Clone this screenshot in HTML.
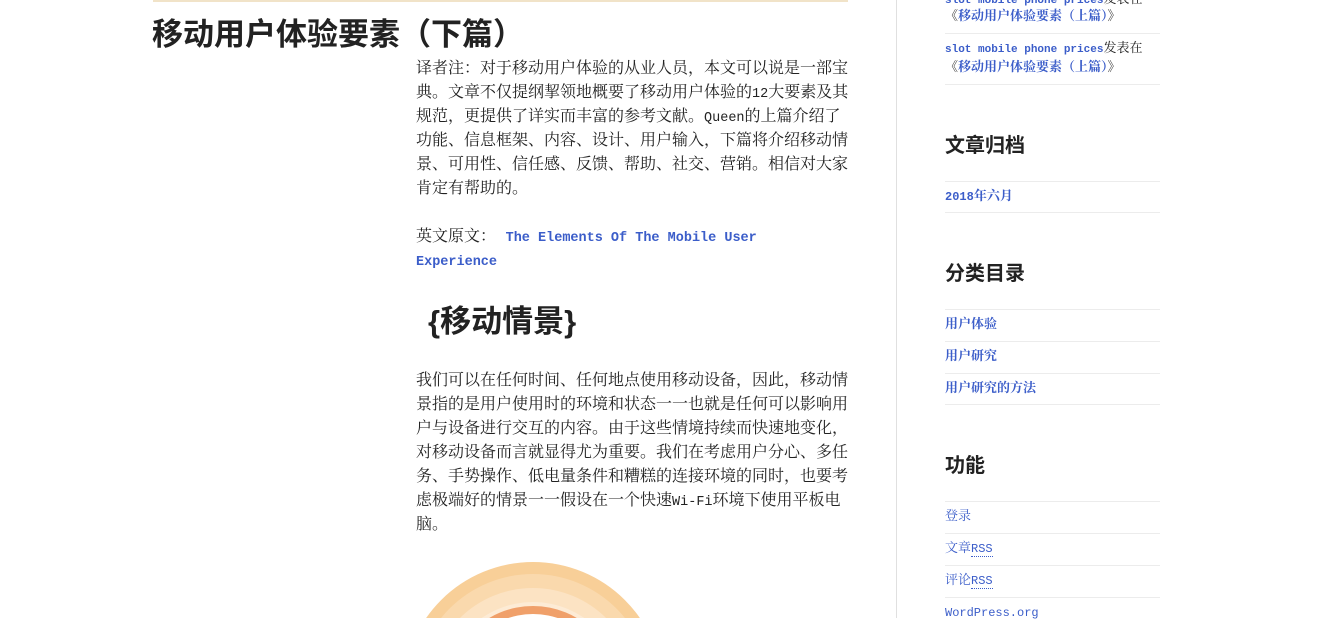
<!DOCTYPE html>
<html><head><meta charset="utf-8"><style>
body{margin:0;width:1319px;height:618px;overflow:hidden;background:#fff;position:relative;font-family:"Liberation Mono","Noto Serif CJK SC",monospace;color:#222}
.a{position:absolute;white-space:nowrap}
.t{font-family:"Liberation Sans","Noto Sans CJK SC",sans-serif;font-weight:bold;color:#222}
.p{left:416px;font-size:16px;line-height:24px}
.p div{height:24px;line-height:24px}
.m{font-size:13.5px;line-height:1}
.s{left:945px;font-size:13px;line-height:16px;color:#3b5dc9;font-weight:bold}
.e{font-size:11px;line-height:1}
.l{position:absolute;left:945px;width:215px;height:1px;background:#ececec}
a{color:#3b5dc9;text-decoration:none}
</style></head><body>
<div class="a" style="left:153px;top:0;width:695px;height:2px;background:#f1e3c8"></div>
<div class="a" style="left:896px;top:0;width:1px;height:618px;background:#e0e0e0"></div>
<div class="a t" style="left:152px;top:14px;font-size:31px;line-height:42px">移动用户体验要素（下篇）</div>
<div class="a p" style="top:57px"><div>译者注：对于移动用户体验的从业人员，本文可以说是一部宝</div><div>典。文章不仅提纲挈领地概要了移动用户体验的<span class="m">12</span>大要素及其</div><div>规范，更提供了详实而丰富的参考文献。<span class="m">Queen</span>的上篇介绍了</div><div>功能、信息框架、内容、设计、用户输入，下篇将介绍移动情</div><div>景、可用性、信任感、反馈、帮助、社交、营销。相信对大家</div><div>肯定有帮助的。</div></div>
<div class="a p" style="top:225px"><div>英文原文： <a class="m" style="font-weight:bold">The Elements Of The Mobile User</a></div><div><a class="m" style="font-weight:bold">Experience</a></div></div>
<div class="a t" style="left:428px;top:300px;font-size:31px;line-height:44px">{移动情景}</div>
<div class="a p" style="top:369px"><div>我们可以在任何时间、任何地点使用移动设备，因此，移动情</div><div>景指的是用户使用时的环境和状态一一也就是任何可以影响用</div><div>户与设备进行交互的内容。由于这些情境持续而快速地变化，</div><div>对移动设备而言就显得尤为重要。我们在考虑用户分心、多任</div><div>务、手势操作、低电量条件和糟糕的连接环境的同时，也要考</div><div>虑极端好的情景一一假设在一个快速<span class="m">Wi-Fi</span>环境下使用平板电</div><div>脑。</div></div>
<svg class="a" style="left:400px;top:540px" width="300" height="78">
<circle cx="133" cy="152" r="130" fill="#f8cf98"/>
<circle cx="133" cy="152" r="118" fill="#fad9ad"/>
<circle cx="133" cy="152" r="104" fill="#fce3c3"/>
<circle cx="133" cy="152" r="90" fill="#fdebd5"/>
<circle cx="133" cy="152" r="86" fill="#f0a06a"/>
<circle cx="133" cy="152" r="78" fill="#fff"/>
<circle cx="133" cy="152" r="72" fill="#e97a40"/>
</svg>
<div class="a s" style="top:-8px"><a class="e">slot mobile phone prices</a><span style="color:#222;font-weight:normal">发表在</span></div>
<div class="a s" style="top:9px"><span style="color:#222;font-weight:normal">《</span>移动用户体验要素（上篇）<span style="color:#222;font-weight:normal">》</span></div>
<div class="l" style="top:33px"></div>
<div class="a s" style="top:41px"><a class="e">slot mobile phone prices</a><span style="color:#222;font-weight:normal">发表在</span></div>
<div class="a s" style="top:60px"><span style="color:#222;font-weight:normal">《</span>移动用户体验要素（上篇）<span style="color:#222;font-weight:normal">》</span></div>
<div class="l" style="top:84px"></div>
<div class="a t" style="left:945px;top:132px;font-size:20px;line-height:28px">文章归档</div>
<div class="l" style="top:181px"></div>
<div class="a s" style="top:189px"><span class="e" style="font-size:12px">2018</span>年六月</div>
<div class="l" style="top:212px"></div>
<div class="a t" style="left:945px;top:260px;font-size:20px;line-height:28px">分类目录</div>
<div class="l" style="top:309px"></div>
<div class="a s" style="top:317px">用户体验</div>
<div class="l" style="top:341px"></div>
<div class="a s" style="top:349px">用户研究</div>
<div class="l" style="top:373px"></div>
<div class="a s" style="top:381px">用户研究的方法</div>
<div class="l" style="top:404px"></div>
<div class="a t" style="left:945px;top:452px;font-size:20px;line-height:28px">功能</div>
<div class="l" style="top:501px"></div>
<div class="a s" style="top:509px;font-weight:normal">登录</div>
<div class="l" style="top:533px"></div>
<div class="a s" style="top:541px;font-weight:normal">文章<span class="e" style="font-size:12px;border-bottom:1px dotted #3b5dc9">RSS</span></div>
<div class="l" style="top:565px"></div>
<div class="a s" style="top:573px;font-weight:normal">评论<span class="e" style="font-size:12px;border-bottom:1px dotted #3b5dc9">RSS</span></div>
<div class="l" style="top:597px"></div>
<div class="a s" style="top:605px;font-weight:normal"><span class="e" style="font-size:12px">WordPress.org</span></div>
</body></html>
